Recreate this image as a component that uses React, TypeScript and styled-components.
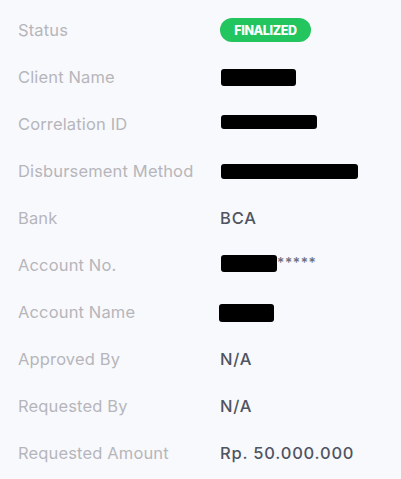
import React from "react";
import styled, { createGlobalStyle } from "styled-components";

const Global = createGlobalStyle`
  html, body { margin: 0; padding: 0; background: #f8f9fd; }
  body { font-family: Inter, "Noto Sans", sans-serif; }
`;

const Panel = styled.div`
  width: 401px;
  height: 479px;
  box-sizing: border-box;
  padding: 6px 0 0 18px;
  background: #f8f9fd;
`;

const Row = styled.div`
  display: grid;
  grid-template-columns: 202px 1fr;
  align-items: center;
  height: 47px;
`;

const Label = styled.div`
  font-size: 16.5px;
  color: #b6b6ba;
  letter-spacing: 0.15px;
  white-space: nowrap;
`;

const Value = styled.div`
  display: flex;
  align-items: center;
  font-size: 16.5px;
  color: #4f5461;
  font-weight: 500;
  letter-spacing: 0.8px;
`;

const Badge = styled.span`
  display: inline-flex;
  align-items: center;
  justify-content: center;
  height: 24px;
  width: 91px;
  border-radius: 12px;
  background: #22c55e;
  color: #ffffff;
  font-size: 12.5px;
  font-weight: 800;
  letter-spacing: -0.4px;
  margin-top: 1px;
`;

const Redact = styled.span<{ $w: number; $h?: number; $dx?: number; $dy?: number }>`
  display: inline-block;
  width: ${(p) => p.$w}px;
  height: ${(p) => p.$h ?? 17}px;
  margin-left: ${(p) => p.$dx ?? 1}px;
  transform: translateY(${(p) => p.$dy ?? 0}px);
  background: #000;
  border-radius: 3px;
`;

const Stars = styled.span`
  font-size: 14px;
  color: #6b7080;
  letter-spacing: 0.6px;
  margin-top: -4px;
`;

const rows: { label: string; value: React.ReactNode }[] = [
  { label: "Status", value: <Badge>FINALIZED</Badge> },
  { label: "Client Name", value: <Redact $w={75} $h={17} $dy={1} /> },
  { label: "Correlation ID", value: <Redact $w={96} $h={14} $dy={-2} /> },
  { label: "Disbursement Method", value: <Redact $w={137} $h={15} $dy={1} /> },
  { label: "Bank", value: "BCA" },
  {
    label: "Account No.",
    value: (
      <>
        <Redact $w={56} $h={17} $dy={-1} />
        <Stars>*****</Stars>
      </>
    ),
  },
  { label: "Account Name", value: <Redact $w={55} $h={18} $dx={-1} $dy={1} /> },
  { label: "Approved By", value: "N/A" },
  { label: "Requested By", value: "N/A" },
  { label: "Requested Amount", value: "Rp. 50.000.000" },
];

export default function App() {
  return (
    <>
      <Global />
      <Panel>
        {rows.map((r) => (
          <Row key={r.label}>
            <Label>{r.label}</Label>
            <Value>{r.value}</Value>
          </Row>
        ))}
      </Panel>
    </>
  );
}
